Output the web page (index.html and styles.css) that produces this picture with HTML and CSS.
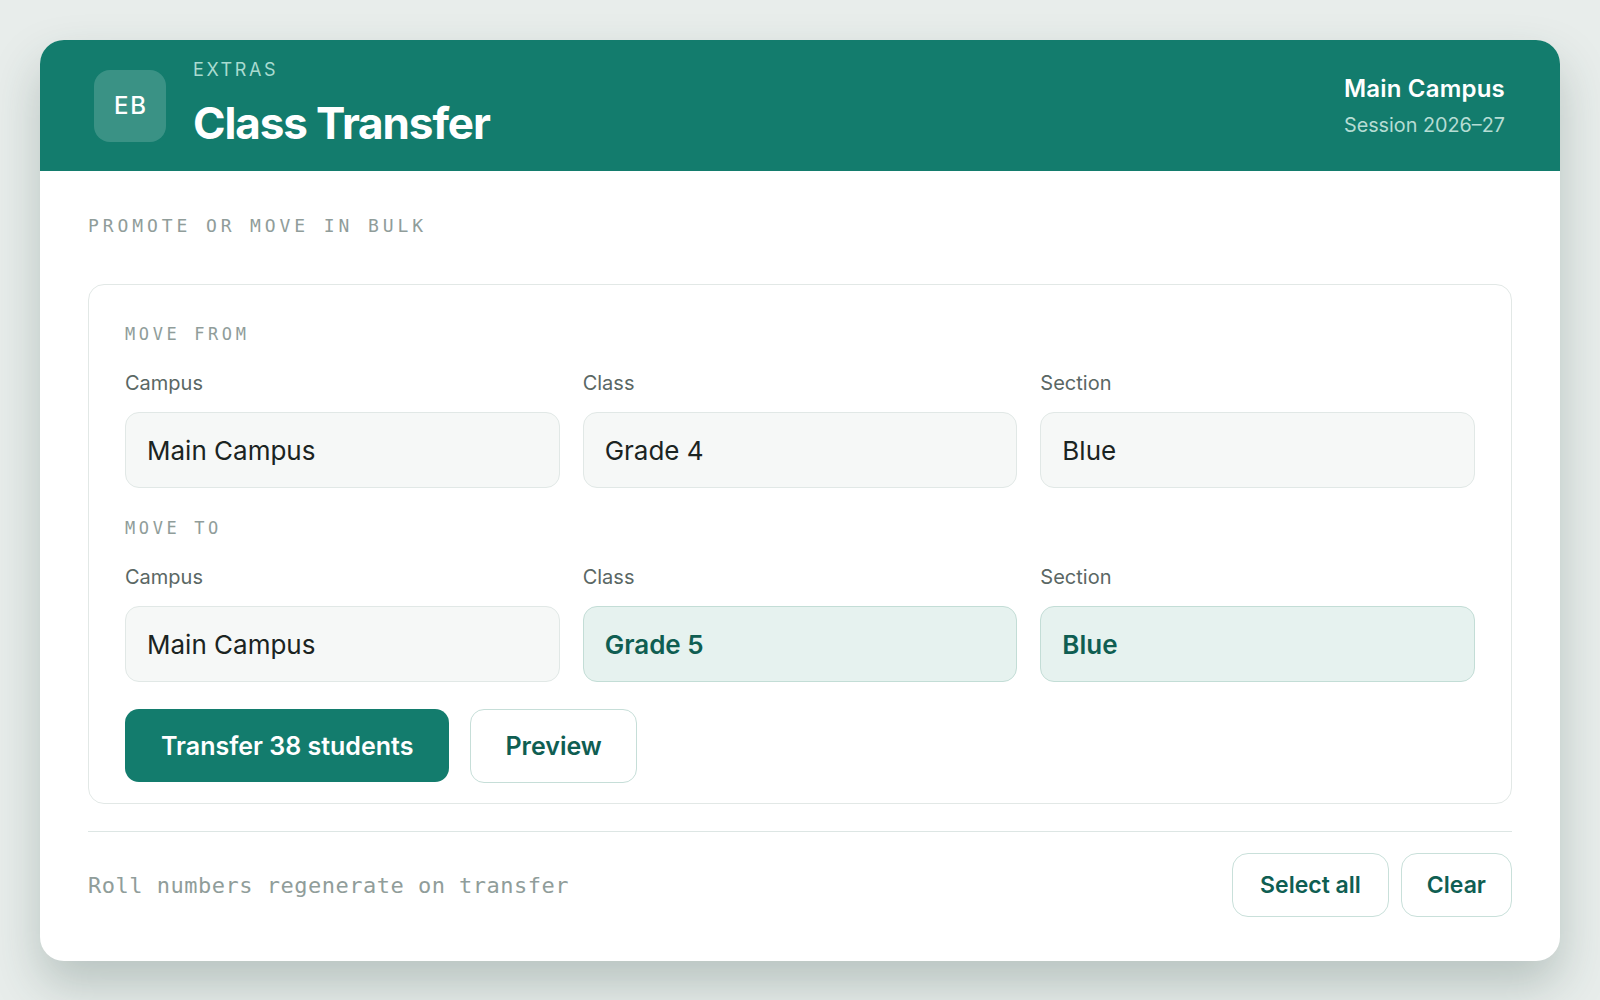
FILE: index.html
```html
<!DOCTYPE html>
<html lang="en">
<head>
    <meta charset="UTF-8">
    <meta name="viewport" content="width=device-width, initial-scale=1.0">
    <title>Class Transfer</title>
    <link rel="stylesheet" href="styles.css">
</head>
<body>
    <div class="card">
        <div class="header">
            <div class="brand">
                <div class="avatar">EB</div>
                <div class="heading">
                    <div class="eyebrow">EXTRAS</div>
                    <h1>Class Transfer</h1>
                </div>
            </div>
            <div class="campus">
                <div class="campus-name">Main Campus</div>
                <div class="session">Session 2026–27</div>
            </div>
        </div>

        <div class="content">
            <div class="section-title">PROMOTE OR MOVE IN BULK</div>

            <div class="panel">
                <div class="group-title">MOVE FROM</div>
                <div class="fields">
                    <div class="field-col">
                        <label>Campus</label>
                        <div class="field">Main Campus</div>
                    </div>
                    <div class="field-col">
                        <label>Class</label>
                        <div class="field">Grade 4</div>
                    </div>
                    <div class="field-col">
                        <label>Section</label>
                        <div class="field">Blue</div>
                    </div>
                </div>

                <div class="group-title second">MOVE TO</div>
                <div class="fields">
                    <div class="field-col">
                        <label>Campus</label>
                        <div class="field">Main Campus</div>
                    </div>
                    <div class="field-col">
                        <label>Class</label>
                        <div class="field changed">Grade 5</div>
                    </div>
                    <div class="field-col">
                        <label>Section</label>
                        <div class="field changed">Blue</div>
                    </div>
                </div>

                <div class="actions">
                    <button class="btn primary">Transfer 38 students</button>
                    <button class="btn outline">Preview</button>
                </div>
            </div>

            <div class="footer">
                <div class="note">Roll numbers regenerate on transfer</div>
                <div class="footer-buttons">
                    <button class="btn small">Select all</button>
                    <button class="btn small clear">Clear</button>
                </div>
            </div>
        </div>
    </div>
</body>
</html>
```

FILE: styles.css
```css
* {
    box-sizing: border-box;
}
body {
    margin: 0;
    padding: 40px;
    background-color: #e8edeb;
    font-family: Inter, "Noto Sans", sans-serif;
}
.card {
    width: 1520px;
    background: white;
    border-radius: 24px;
    overflow: hidden;
    box-shadow: 0 24px 48px rgba(40, 70, 64, 0.25);
}

/* header bar */
.header {
    height: 131px;
    background-color: #137c6d;
    display: flex;
    align-items: center;
    justify-content: space-between;
    padding: 0 55px 0 54px;
    color: white;
}
.brand {
    display: flex;
    align-items: center;
    gap: 27px;
}
.avatar {
    width: 72px;
    height: 72px;
    border-radius: 16px;
    background: rgba(255, 255, 255, 0.17);
    display: flex;
    align-items: center;
    justify-content: center;
    font-size: 24px;
    font-weight: 500;
    letter-spacing: 2px;
    padding-left: 2px;
}
.heading {
    margin-bottom: 4px;
}
.eyebrow {
    font-size: 18px;
    line-height: 20px;
    letter-spacing: 2.6px;
    color: #a9dbd0;
}
h1 {
    margin: 19px 0 0;
    font-size: 44px;
    line-height: 48px;
    font-weight: 700;
    letter-spacing: -1.1px;
}
.campus {
    text-align: right;
}
.campus-name {
    font-size: 24px;
    line-height: 28px;
    font-weight: 600;
    letter-spacing: 0.2px;
}
.session {
    margin-top: 10px;
    font-size: 19.8px;
    line-height: 24px;
    color: #b6ddd4;
}

/* body */
.content {
    padding: 44px 48px 44px;
}
.section-title,
.group-title,
.note {
    font-family: "DejaVu Sans Mono", "Liberation Mono", monospace;
    color: #909d9a;
}
.section-title {
    font-size: 18px;
    line-height: 22px;
    letter-spacing: 3.9px;
}
.panel {
    margin-top: 47px;
    border: 1px solid #e2e8e6;
    border-radius: 16px;
    padding: 39px 36px 20px 36px;
}
.group-title {
    font-size: 17px;
    line-height: 20px;
    letter-spacing: 3.6px;
}
.group-title.second {
    margin-top: 30px;
}
.fields {
    display: grid;
    grid-template-columns: repeat(3, 1fr);
    column-gap: 23px;
    margin-top: 27px;
}
.field-col label {
    display: block;
    font-size: 20px;
    line-height: 24px;
    color: #5a6764;
    margin-bottom: 17px;
}
.field {
    height: 76px;
    border: 1px solid #e1e8e6;
    background: #f6f8f7;
    border-radius: 14px;
    padding: 0 21px;
    display: flex;
    align-items: center;
    font-size: 26px;
    color: #1b2422;
}
.field.changed {
    background: #e6f2ef;
    border-color: #c3ddd6;
    color: #0f5e52;
    font-weight: 600;
}

/* buttons */
.btn {
    font-family: Inter, "Noto Sans", sans-serif;
    font-weight: 600;
    border-radius: 14px;
    cursor: pointer;
}
.actions {
    display: flex;
    gap: 21px;
    margin-top: 27px;
}
.primary {
    height: 73px;
    padding: 0 36px;
    font-size: 25px;
    background-color: #137c6d;
    color: white;
    border: none;
}
.outline {
    height: 74px;
    padding: 0 34px;
    font-size: 25px;
    background: white;
    color: #0f5e52;
    border: 1px solid #c6ded8;
}
.footer {
    margin-top: 27px;
    border-top: 1px solid #dde6e4;
    padding-top: 21px;
    display: flex;
    align-items: center;
    justify-content: space-between;
}
.note {
    font-size: 22px;
    letter-spacing: 0.5px;
}
.footer-buttons {
    display: flex;
    gap: 12px;
}
.small {
    height: 64px;
    padding: 0 27px;
    font-size: 23px;
    border-radius: 16px;
    background: white;
    color: #0f5e52;
    border: 1px solid #c9e0da;
}
.small.clear {
    padding: 0 25px;
}
```
